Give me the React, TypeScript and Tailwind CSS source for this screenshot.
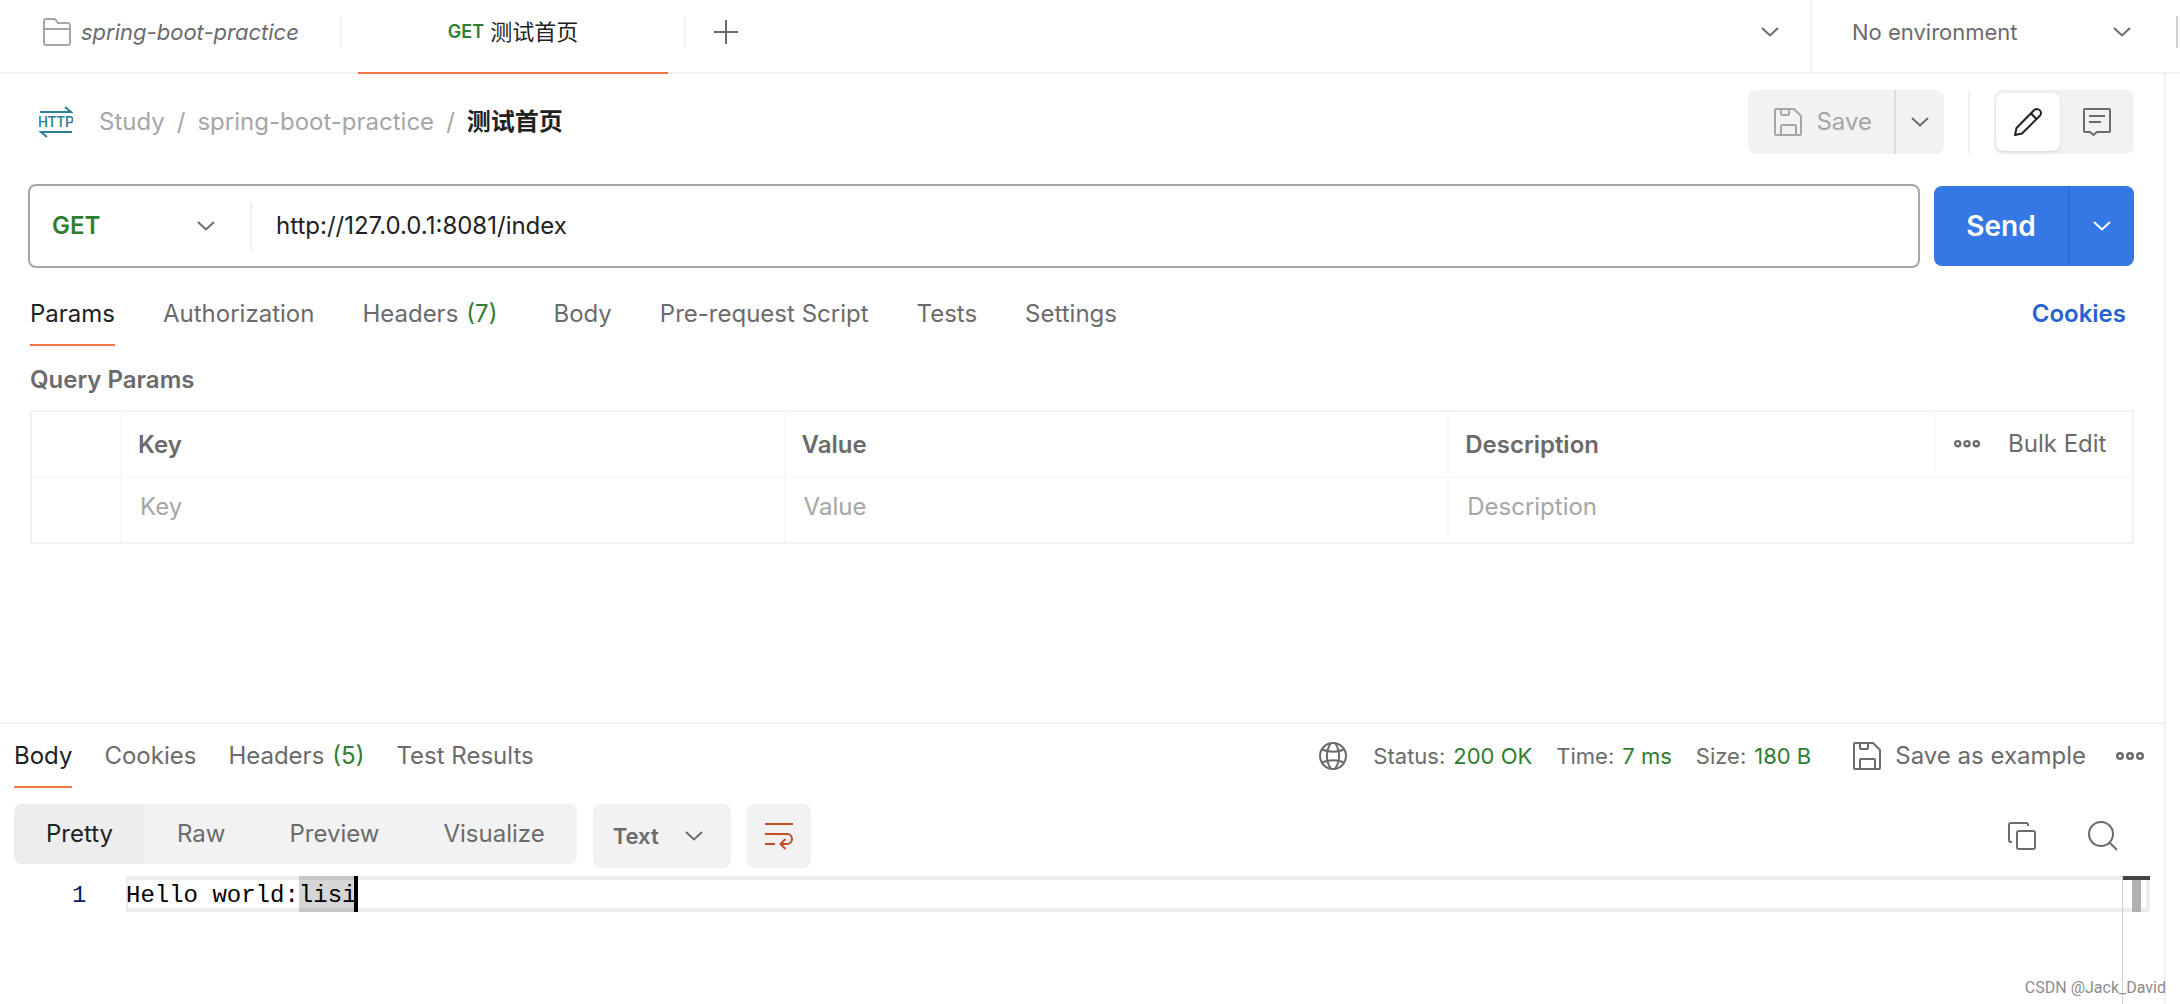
import { useState } from "react";

const METHODS = ["GET", "POST", "PUT", "PATCH", "DELETE"];

const REQUEST_TABS = [
  { name: "Params" },
  { name: "Authorization" },
  { name: "Headers", count: 7 },
  { name: "Body" },
  { name: "Pre-request Script" },
  { name: "Tests" },
  { name: "Settings" },
];

const RESPONSE_TABS = [
  { name: "Body" },
  { name: "Cookies" },
  { name: "Headers", count: 5 },
  { name: "Test Results" },
];

const VIEWS = ["Pretty", "Raw", "Preview", "Visualize"];

function ChevronDown() {
  return (
    <svg width="18" height="10" viewBox="0 0 18 10" fill="none" stroke="currentColor" strokeWidth="2">
      <path d="M1 1l8 7.5L17 1" />
    </svg>
  );
}

function FolderIcon() {
  return (
    <svg width="28" height="28" viewBox="0 0 28 28" fill="none" stroke="#a6a6a6" strokeWidth="2">
      <path d="M1 3a2 2 0 0 1 2-2h8a2 2 0 0 1 1.500.7L15 5h10a2 2 0 0 1 2 2v18a2 2 0 0 1-2 2H3a2 2 0 0 1-2-2z" />
      <path d="M1 11h26" />
    </svg>
  );
}

function HttpIcon() {
  return (
    <svg width="34" height="32" viewBox="0 0 34 32" fill="none" stroke="#2e7f95" strokeWidth="2">
      <path d="M1 6h31L26 1" />
      <path d="M33 26H2L8 31" />
      <text
        x="17"
        y="21"
        textAnchor="middle"
        fill="#2e7f95"
        stroke="none"
        className="font-['Liberation_Sans_Narrow','Roboto',sans-serif] text-[14px] font-medium"
      >
        HTTP
      </text>
    </svg>
  );
}

function SaveIcon() {
  return (
    <svg width="28" height="28" viewBox="0 0 28 28" fill="none" stroke="currentColor" strokeWidth="2">
      <path d="M2 1h18l7 7v18a1 1 0 0 1-1 1H2a1 1 0 0 1-1-1V2a1 1 0 0 1 1-1z" />
      <path d="M7 1v5a1 1 0 0 0 1 1h6a1 1 0 0 0 1-1V1M7 27v-9a1 1 0 0 1 1-1h13a1 1 0 0 1 1 1v9" />
    </svg>
  );
}

function PencilIcon() {
  return (
    <svg width="28" height="28" viewBox="0 0 28 28" fill="none" stroke="currentColor" strokeWidth="2" strokeLinejoin="round">
      <path d="M1 27l1.500-7L20 2.200a3.500 3.500 0 0 1 2.500-1.200c2.500 0 4.500 2 4.500 4.300a3.500 3.500 0 0 1-1.200 2.500L8 25.500z" />
      <path d="M17 5.500l5.500 5.500" />
    </svg>
  );
}

function CommentIcon() {
  return (
    <svg width="28" height="28" viewBox="0 0 28 28" fill="none" stroke="currentColor" strokeWidth="2">
      <path d="M2 1h24a1 1 0 0 1 1 1v21a1 1 0 0 1-1 1H14L10.500 27 7 24H2a1 1 0 0 1-1-1V2a1 1 0 0 1 1-1z" />
      <path d="M6 8h16M6 14h12" />
    </svg>
  );
}

function DotsIcon({ width = 28 }: { width?: number }) {
  return (
    <svg width={width} viewBox="0 0 28 10" fill="none" stroke="currentColor" strokeWidth="2.5">
      <circle cx="4" cy="5" r="2.800" />
      <circle cx="14" cy="5" r="2.800" />
      <circle cx="24" cy="5" r="2.800" />
    </svg>
  );
}

function GlobeIcon() {
  return (
    <svg width="28" height="28" viewBox="0 0 28 28" fill="none" stroke="currentColor" strokeWidth="2">
      <circle cx="14" cy="14" r="13" />
      <path d="M12 1C6.500 9 6.500 19 12 27M16 1c5.500 8 5.500 18 0 26" />
      <path d="M3 7.500c6 3 16 3 22 0M3 20.500c6-3 16-3 22 0" />
    </svg>
  );
}

function WrapIcon() {
  return (
    <svg width="28" height="28" viewBox="0 0 28 28" fill="none" stroke="#c64a25" strokeWidth="2">
      <path d="M0 2h28M0 12h22a5 5 0 0 1 0 10h-7M0 22h10" />
      <path d="M20.500 17l-5 5 5 5" />
    </svg>
  );
}

function CopyIcon() {
  return (
    <svg width="28" height="28" viewBox="0 0 28 28" fill="none" stroke="currentColor" strokeWidth="2">
      <path d="M4 20H3a2 2 0 0 1-2-2V3a2 2 0 0 1 2-2h15a2 2 0 0 1 2 2v1" />
      <rect x="9" y="9" width="18" height="18" rx="2" />
    </svg>
  );
}

function SearchIcon() {
  return (
    <svg width="30" height="30" viewBox="0 0 30 30" fill="none" stroke="currentColor" strokeWidth="2">
      <circle cx="13" cy="13" r="12" />
      <path d="M21.500 21.500L29 29" />
    </svg>
  );
}

interface TabProps {
  name: string;
  count?: number;
  active: boolean;
  onClick: () => void;
}

function Tab({ name, count, active, onClick }: TabProps) {
  return (
    <button
      onClick={onClick}
      className={`flex h-16 items-center gap-2 border-b-2 pt-0.5 ${
        active ? "border-[#f0764a] text-[#212121]" : "border-transparent"
      }`}
    >
      {name}
      {count && <span className="text-[#2f7d32]">({count})</span>}
    </button>
  );
}

function TopBar() {
  return (
    <header className="flex h-[74px] border-b-2 border-[#f2f2f2]">
      <button className="flex w-[342px] items-start pt-4 pl-[43px]">
        <span className="flex h-8 w-full items-center gap-2.5 border-r-2 border-[#f2f2f2] text-[22px] italic">
          <FolderIcon />
          spring-boot-practice
        </span>
      </button>
      <div className="-mb-0.5 ml-4 w-[310px] border-b-2 border-[#f0764a]">
        <button className="flex h-16 w-full items-center justify-center gap-1.5 text-[22px] text-[#212121]">
          <span className="text-[18px] font-semibold text-[#2f7d32]">GET</span>
          测试首页
        </button>
      </div>
      <span className="mt-4 ml-4 h-8 w-0.5 bg-[#f2f2f2]" />
      <button aria-label="New tab" className="ml-7 flex h-16 items-center">
        <svg width="24" height="24" viewBox="0 0 24 24" stroke="currentColor" strokeWidth="2">
          <path d="M12 0v24M0 12h24" />
        </svg>
      </button>
      <button aria-label="Open tabs" className="ml-auto flex h-16 items-center px-[31px]">
        <ChevronDown />
      </button>
      <div className="flex w-[370px] items-start border-l-2 border-[#f2f2f2] pl-10">
        <button className="flex h-16 w-[279px] items-center justify-between text-[22px]">
          No environment
          <ChevronDown />
        </button>
        <span className="mt-4 mr-0.5 ml-auto h-8 w-0.5 bg-[#cfcfcf]" />
      </div>
    </header>
  );
}

function Breadcrumb() {
  return (
    <div className="flex h-16 items-center">
      <HttpIcon />
      <nav className="ml-[26px] flex items-center gap-3 text-[#a6a6a6]">
        <a href="#study">Study</a>
        <span>/</span>
        <a href="#spring-boot-practice">spring-boot-practice</a>
        <span>/</span>
        <span className="font-semibold text-[#212121]">测试首页</span>
      </nav>
      <div className="ml-auto flex h-16 overflow-hidden rounded-lg bg-[#f2f2f2]">
        <button className="flex items-center gap-3.5 border-r-2 border-[#dcdcdc] pr-[22px] pl-[26px] text-[#a6a6a6]">
          <SaveIcon />
          Save
        </button>
        <button aria-label="Save options" className="flex w-12 items-center justify-center">
          <ChevronDown />
        </button>
      </div>
      <span className="mx-6 h-16 w-0.5 bg-[#f2f2f2]" />
      <div className="flex h-16 w-[140px] items-center rounded-lg bg-[#f2f2f2] pl-0.5">
        <button
          aria-label="Edit"
          className="flex h-[58px] w-16 items-center justify-center rounded-lg bg-white text-[#212121] shadow-sm"
        >
          <PencilIcon />
        </button>
        <button aria-label="Comments" className="flex h-16 flex-1 items-center justify-center">
          <CommentIcon />
        </button>
      </div>
    </div>
  );
}

function UrlBar() {
  const [method, setMethod] = useState("GET");
  const [url, setUrl] = useState("http://127.0.0.1:8081/index");

  return (
    <div className="mt-[30px] flex items-center gap-3.5">
      <div className="flex h-[84px] flex-1 items-center rounded-lg border-2 border-[#a6a6a6]">
        <label className="relative flex items-center">
          <select
            aria-label="Method"
            value={method}
            onChange={(e) => setMethod(e.target.value)}
            className="w-[220px] appearance-none bg-white pl-[22px] font-semibold text-[#2f7d32] outline-none"
          >
            {METHODS.map((m) => (
              <option key={m}>{m}</option>
            ))}
          </select>
          <span className="pointer-events-none absolute right-[35px]">
            <ChevronDown />
          </span>
        </label>
        <input
          aria-label="Request URL"
          value={url}
          onChange={(e) => setUrl(e.target.value)}
          className="h-12 flex-1 border-l-2 border-[#ededed] px-6 pb-0.5 text-[#212121] outline-none"
        />
      </div>
      <div className="flex h-20 overflow-hidden rounded-lg bg-[#3578e5] text-white">
        <button className="w-[134px] text-[28px] font-semibold">Send</button>
        <button
          aria-label="Send options"
          className="flex w-[66px] items-center justify-center border-l-2 border-[#2f6dd6]"
        >
          <ChevronDown />
        </button>
      </div>
    </div>
  );
}

function ParamsTable() {
  const cell = "border-l-2 border-[#f9f9f9] px-4";
  const field = "mb-1.5 w-full pl-0.5 placeholder:text-[#a6a6a6]";

  return (
    <table className="mt-3.5 w-full table-fixed border-separate border-spacing-0 border-2 border-[#f2f2f2] text-left">
      <colgroup>
        <col className="w-[88px]" />
        <col className="w-[31.6%]" />
        <col className="w-[31.6%]" />
        <col />
        <col className="w-[198px]" />
      </colgroup>
      <thead>
        <tr className="h-[66px]">
          <td className="border-b-2 border-[#f9f9f9]" />
          <th className={`border-b-2 pt-0.5 font-semibold ${cell}`}>Key</th>
          <th className={`border-b-2 pt-0.5 font-semibold ${cell}`}>Value</th>
          <th className={`border-b-2 pt-0.5 font-semibold ${cell}`}>Description</th>
          <td className="border-b-2 border-l-2 border-[#f9f9f9] pl-[18px]">
            <div className="flex items-center gap-7">
              <button aria-label="More options">
                <DotsIcon width={26} />
              </button>
              <button>Bulk Edit</button>
            </div>
          </td>
        </tr>
      </thead>
      <tbody>
        <tr className="h-16">
          <td />
          <td className={cell}>
            <input aria-label="Key" placeholder="Key" className={field} />
          </td>
          <td className={cell}>
            <input aria-label="Value" placeholder="Value" className={field} />
          </td>
          <td colSpan={2} className={cell}>
            <input aria-label="Description" placeholder="Description" className={field} />
          </td>
        </tr>
      </tbody>
    </table>
  );
}

function RequestPanel() {
  const [tab, setTab] = useState("Params");

  return (
    <section className="min-h-[648px] pt-4 pr-[30px] pl-7">
      <div className="pl-[11px]">
        <Breadcrumb />
      </div>
      <UrlBar />
      <div className="pl-0.5">
        <div className="mt-3.5 flex items-center gap-12">
          {REQUEST_TABS.map((t) => (
            <div key={t.name} className={t.count ? "pr-2" : ""}>
              <Tab {...t} active={t.name === tab} onClick={() => setTab(t.name)} />
            </div>
          ))}
          <a href="#cookies" className="mr-2 ml-auto font-semibold text-[#2463d1]">
            Cookies
          </a>
        </div>
        <h2 className="mt-[18px] font-semibold">Query Params</h2>
        <ParamsTable />
      </div>
    </section>
  );
}

function Stat({ label, value }: { label: string; value: string }) {
  return (
    <span className="flex gap-2 text-[22px]">
      {label}: <span className="text-[#2f7d32]">{value}</span>
    </span>
  );
}

function Editor() {
  return (
    <div className="mt-2 flex flex-1 pr-3.5 pl-[72px] font-['Liberation_Mono',monospace] leading-10 text-black">
      <span className="w-[54px] text-[#0b216f]">1</span>
      <div className="flex h-9 flex-1 border-y-4 border-l-2 border-[#ededed]">
        <code className="-my-1 -ml-0.5 flex font-['Liberation_Mono',monospace]">
          Hello world:
          <mark className="h-9 bg-black/16 text-black">lisi</mark>
          <span className="-ml-0.5 h-9 w-1 bg-black" />
        </code>
      </div>
      {/* overview ruler */}
      <div className="w-7 border-l border-[#cfcfcf]">
        <div className="h-1 bg-[#444]" />
        <div className="flex h-8 justify-center border-r-4 border-b-4 border-[#ededed]">
          <span className="ml-1 h-8 w-[9px] bg-[#b0b0b0]" />
        </div>
      </div>
    </div>
  );
}

function ResponsePanel() {
  const [tab, setTab] = useState("Body");
  const [view, setView] = useState("Pretty");

  return (
    <section className="flex flex-1 flex-col border-t-2 border-[#f2f2f2]">
      <div className="flex items-center gap-8 pr-5 pl-3.5">
        {RESPONSE_TABS.map((t) => (
          <Tab key={t.name} {...t} active={t.name === tab} onClick={() => setTab(t.name)} />
        ))}
        <div className="ml-auto flex items-center gap-6">
          <span className="mr-0.5">
            <GlobeIcon />
          </span>
          <Stat label="Status" value="200 OK" />
          <Stat label="Time" value="7 ms" />
          <Stat label="Size" value="180 B" />
        </div>
        <div className="ml-2.5 flex items-center gap-[30px]">
          <button className="flex items-center gap-3.5">
            <SaveIcon />
            Save as example
          </button>
          <button aria-label="More actions">
            <DotsIcon />
          </button>
        </div>
      </div>
      <div className="mt-4 flex items-start gap-4 pr-[46px] pl-3.5">
        <div className="flex h-[60px] overflow-hidden rounded-lg bg-[#f2f2f2]">
          {VIEWS.map((v) => (
            <button
              key={v}
              onClick={() => setView(v)}
              className={`px-8 ${v === view ? "bg-[#ededed] text-[#212121]" : ""}`}
            >
              {v}
            </button>
          ))}
        </div>
        <button className="flex h-16 items-center gap-[26px] rounded-lg bg-[#f2f2f2] pr-7 pl-5 text-[22px] font-semibold">
          Text
          <ChevronDown />
        </button>
        <button aria-label="Wrap lines" className="flex size-16 items-center justify-center rounded-lg bg-[#f2f2f2]">
          <WrapIcon />
        </button>
        <button aria-label="Copy" className="ml-auto flex h-16 items-center">
          <CopyIcon />
        </button>
        <button aria-label="Search" className="ml-9 flex h-16 items-center">
          <SearchIcon />
        </button>
      </div>
      <Editor />
    </section>
  );
}

export default function App() {
  return (
    <div className="relative flex min-h-screen flex-col bg-white font-['Inter','Noto_Sans_CJK_SC',sans-serif] text-[24px] leading-8 text-[#6b6b6b]">
      <TopBar />
      <main className="mr-3.5 flex flex-1 flex-col border-r-2 border-[#f2f2f2]">
        <RequestPanel />
        <ResponsePanel />
      </main>
      <span className="absolute right-[14px] bottom-1 font-['Roboto',sans-serif] text-[16px] leading-6 text-[#8c8c8c]">
        CSDN @Jack_David
      </span>
    </div>
  );
}
